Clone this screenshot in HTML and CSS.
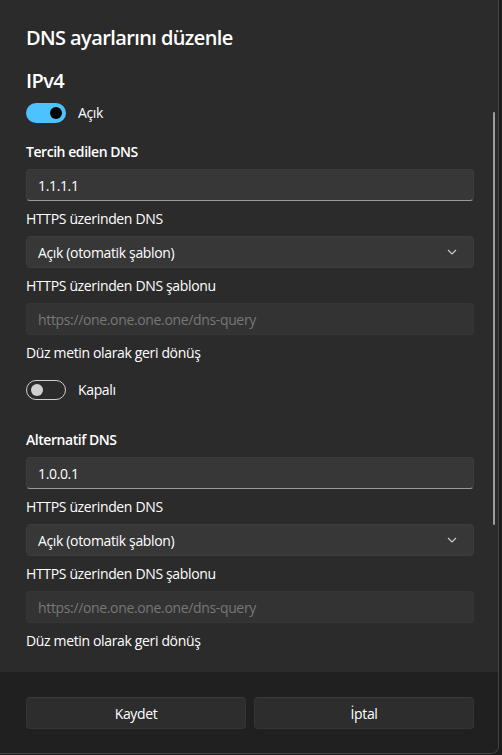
FILE: index.html
```html
<!DOCTYPE html>
<html lang="tr">

<head>
    <meta charset="UTF-8">
    <meta name="viewport" content="width=device-width, initial-scale=1.0">
    <title>DNS ayarlarını düzenle</title>

    <link rel="stylesheet" href="styles.css">
</head>

<body>
    <div class="dialog">
        <div class="content">
            <h1 class="title">DNS ayarlarını düzenle</h1>
            <h2 class="section">IPv4</h2>
            <div class="toggle-row">
                <span class="toggle on"><span class="knob"></span></span>
                <span class="toggle-label">Açık</span>
            </div>

            <!-- preferred DNS -->
            <div class="label strong first">Tercih edilen DNS</div>
            <div class="field text">1.1.1.1</div>
            <div class="label">HTTPS üzerinden DNS</div>
            <div class="field select">
                <span>Açık (otomatik şablon)</span>
                <svg class="chevron" width="10" height="6" viewBox="0 0 10 6">
                    <polyline points="1,1 5,5 9,1" fill="none" stroke="#d0d0d0" stroke-width="1.1" />
                </svg>
            </div>
            <div class="label">HTTPS üzerinden DNS şablonu</div>
            <div class="field disabled">https://one.one.one.one/dns-query</div>
            <div class="label">Düz metin olarak geri dönüş</div>
            <div class="toggle-row gap">
                <span class="toggle off"><span class="knob"></span></span>
                <span class="toggle-label">Kapalı</span>
            </div>

            <!-- alternate DNS -->
            <div class="label strong alt">Alternatif DNS</div>
            <div class="field text">1.0.0.1</div>
            <div class="label">HTTPS üzerinden DNS</div>
            <div class="field select">
                <span>Açık (otomatik şablon)</span>
                <svg class="chevron" width="10" height="6" viewBox="0 0 10 6">
                    <polyline points="1,1 5,5 9,1" fill="none" stroke="#d0d0d0" stroke-width="1.1" />
                </svg>
            </div>
            <div class="label">HTTPS üzerinden DNS şablonu</div>
            <div class="field disabled">https://one.one.one.one/dns-query</div>
            <div class="label">Düz metin olarak geri dönüş</div>

            <div class="scrollbar"></div>
        </div>

        <div class="footer">
            <button type="button" class="btn">Kaydet</button>
            <button type="button" class="btn">İptal</button>
        </div>
    </div>
</body>

</html>
```

FILE: styles.css
```css
body {
    background-color: #1c1c1c;
    font-family: "Open Sans", "Noto Sans", sans-serif;
    color: white;
    margin: 0;
    padding: 0;
    letter-spacing: -0.35px;
}

.dialog {
    width: 499px;
    height: 754px;
    box-sizing: border-box;
    background-color: #2b2b2b;
    border-right: 1px solid #454545;
    border-bottom: 1px solid #454545;
    border-bottom-right-radius: 8px;
    display: flex;
    flex-direction: column;
    overflow: hidden;
}

.content {
    flex: 1;
    position: relative;
    padding: 24px 24px 0 26px;
    display: flex;
    flex-direction: column;
    overflow: hidden;
}

.title {
    margin: 0;
    font-size: 20px;
    font-weight: 600;
    line-height: 28px;
    letter-spacing: -0.6px;
}

.section {
    margin: 15px 0 0;
    font-size: 20px;
    font-weight: 600;
    line-height: 28px;
    letter-spacing: -0.6px;
}

.toggle-row {
    margin-top: 8px;
    height: 20px;
    display: flex;
    align-items: center;
    gap: 12px;
}

.toggle-row.gap {
    margin-top: 17px;
}

.toggle {
    width: 40px;
    height: 20px;
    box-sizing: border-box;
    border-radius: 10px;
    display: flex;
    align-items: center;
    padding: 0 4px;
}

.toggle .knob {
    width: 12px;
    height: 12px;
    border-radius: 50%;
}

.toggle.on {
    background-color: #4cc2ff;
    justify-content: flex-end;
}

.toggle.on .knob {
    background-color: #000;
}

.toggle.off {
    border: 1px solid #cfcfcf;
}

.toggle.off .knob {
    background-color: #cfcfcf;
}

.toggle-label {
    font-size: 14px;
    line-height: 20px;
}

.label {
    margin-top: 8px;
    font-size: 14px;
    line-height: 20px;
}

.label.strong {
    font-weight: 600;
    letter-spacing: -0.45px;
}

.label.first {
    margin-top: 19px;
}

.label.alt {
    margin-top: 30px;
}

.field {
    margin-top: 7px;
    height: 32px;
    box-sizing: border-box;
    background-color: #373737;
    border: 1px solid #3d3d3d;
    border-radius: 4px;
    padding: 0 11px;
    font-size: 14px;
    display: flex;
    align-items: center;
}

.field.text {
    border-bottom: 1px solid #9a9a9a;
}

.field.select {
    justify-content: space-between;
    padding-right: 16px;
}

.field.disabled {
    background-color: #333333;
    border-color: #363636;
    color: #777777;
}

.chevron {
    display: block;
}

.scrollbar {
    position: absolute;
    left: 493px;
    top: 112px;
    width: 2px;
    height: 413px;
    border-radius: 1px;
    background-color: #9d9d9d;
}

.footer {
    height: 81px;
    box-sizing: border-box;
    background-color: #202020;
    padding: 25px 24px 0 26px;
    display: grid;
    grid-template-columns: 1fr 1fr;
    gap: 8px;
    align-items: start;
}

.btn {
    height: 32px;
    background-color: #2d2d2d;
    border: 1px solid #353535;
    border-top-color: #3a3a3a;
    border-radius: 4px;
    color: white;
    font-family: inherit;
    font-size: 14px;
    letter-spacing: -0.35px;
}
```
